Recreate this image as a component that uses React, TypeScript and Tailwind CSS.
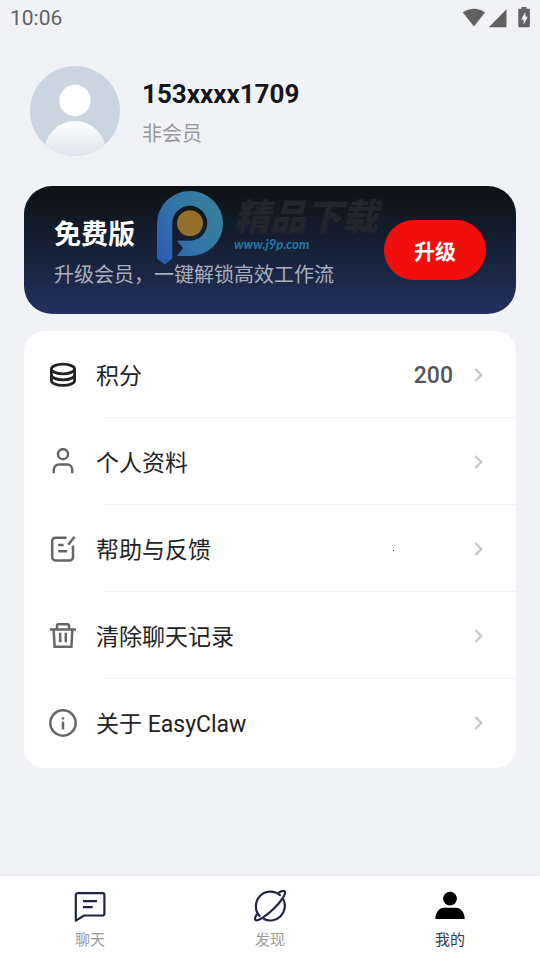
import type { ReactNode } from 'react';

const stroke = {
  width: 28,
  height: 28,
  viewBox: '0 0 28 28',
  fill: 'none',
  stroke: 'currentColor',
  strokeWidth: 2.5,
  'aria-hidden': true,
} as const;

function CoinsIcon() {
  return (
    <svg {...stroke} strokeWidth={2.8} className="text-[#232323]">
      <ellipse cx="14" cy="8" rx="11.6" ry="4.8" />
      <path d="M2.4 8v11.4c0 2.8 5 5 11.6 5s11.6-2.2 11.6-5V8" />
      <path d="M2.4 13.8c0 2.8 5 5 11.6 5s11.6-2.2 11.6-5" />
    </svg>
  );
}

function PersonIcon() {
  return (
    <svg {...stroke}>
      <circle cx="14" cy="6.2" r="5" />
      <path d="M4.8 25.2v-3.6a5 5 0 0 1 5-5h8.4a5 5 0 0 1 5 5v3.6" />
    </svg>
  );
}

function FeedbackIcon() {
  return (
    <svg {...stroke}>
      <path d="M17.6 2.7H6.4a3.2 3.2 0 0 0-3.2 3.2v16.3a3.2 3.2 0 0 0 3.2 3.2h14.4a3.2 3.2 0 0 0 3.2-3.2V10.6" />
      <path d="M19.2 9.8l6.4-8M9.2 10h5.4M9.2 16.2h9" />
    </svg>
  );
}

function TrashIcon() {
  return (
    <svg {...stroke}>
      <path d="M1 7.4h26M8 7.4V3.6a1.4 1.4 0 0 1 1.4-1.4h9.2A1.4 1.4 0 0 1 20 3.6v3.8" />
      <path d="M4.6 7.4l1 17.3h16.8l1-17.3M11.2 10.8v9.4M16.8 10.8v9.4" />
    </svg>
  );
}

function InfoIcon() {
  return (
    <svg {...stroke}>
      <circle cx="14" cy="14" r="12.7" />
      <path d="M14 12.8v7.6M14 8.2v2.3" />
    </svg>
  );
}

function ChevronIcon() {
  return (
    <svg width="10" height="16" viewBox="0 0 10 16" fill="none" stroke="#c8c8c8" strokeWidth="2.4" aria-hidden>
      <path d="M1.3 2l6 6-6 6" />
    </svg>
  );
}

function ChatIcon() {
  return (
    <svg width="32" height="32" viewBox="0 0 32 32" fill="none" stroke="#1f2540" strokeWidth="2.2" strokeLinejoin="round" aria-hidden>
      <path d="M1.8 30.6V5.2a2 2 0 0 1 2-2h24.6a2 2 0 0 1 2 2v18.3a2 2 0 0 1-2 2H10.2z" />
      <path d="M9 11.2h14M9 17.2h9.6" />
    </svg>
  );
}

function PlanetIcon() {
  return (
    <svg width="32" height="32" viewBox="0 0 32 32" fill="none" stroke="#1f2540" strokeWidth="2.2" strokeLinecap="round" aria-hidden>
      <path d="M26 5.2A14.6 14.6 0 0 0 5.6 26" />
      <path d="M29.4 9.6A14.6 14.6 0 0 1 10 29.1" />
      <path d="M25 2.4c3-1.7 5.3-1.9 5.9-.7 1.1 2.2-3.6 9.5-10.4 16.3S4.1 31.5 1.8 30.2c-1.3-.9-.6-3.4.9-5.6" />
    </svg>
  );
}

function MeIcon() {
  return (
    <svg width="32" height="32" viewBox="0 0 32 32" fill="#000" aria-hidden>
      <circle cx="16" cy="8.6" r="6.9" />
      <path d="M1.3 29c0-6.5 4-11.2 9-11.2h11.4c5 0 9 4.7 9 11.2z" />
    </svg>
  );
}

function Avatar() {
  return (
    <svg width="90" height="90" viewBox="0 0 90 90" className="shrink-0" role="img" aria-label="头像">
      <defs>
        <clipPath id="avatar-clip">
          <circle cx="45" cy="45" r="45" />
        </clipPath>
        <linearGradient id="avatar-body" x1="0" y1="55" x2="0" y2="90" gradientUnits="userSpaceOnUse">
          <stop offset="0" stopColor="#fff" />
          <stop offset="1" stopColor="#dfe4ec" />
        </linearGradient>
      </defs>
      <g clipPath="url(#avatar-clip)">
        <rect width="90" height="90" fill="#cbd5e1" />
        <circle cx="45" cy="34.5" r="15.7" fill="#fff" />
        <circle cx="45" cy="85.5" r="30.5" fill="url(#avatar-body)" />
      </g>
    </svg>
  );
}

function StatusBar() {
  return (
    <div className="flex h-9 items-center justify-between pl-2.5 pr-1.5 text-[#616161]">
      <span className="pt-0.5 text-[21px]">10:06</span>
      <svg width="72" height="22" viewBox="0 0 72 22" fill="currentColor" aria-hidden>
        <path d="M0.8 5.6C7.2.6 16.6.6 23 5.6L12 19.6z" />
        <path d="M44.5 2.2v18H26.8z" />
        <path d="M59.5 0h5v1.8h2.2a1.2 1.2 0 0 1 1.2 1.2v16a1.2 1.2 0 0 1-1.2 1.2h-9.2a1.2 1.2 0 0 1-1.2-1.2V3a1.2 1.2 0 0 1 1.2-1.2h2z" />
        <path d="M63.4 5v4.8h2.4L61.6 17.4v-4.8h-2.4z" fill="#f1f2f6" />
      </svg>
    </div>
  );
}

function Watermark() {
  return (
    <div className="pointer-events-none absolute left-[133px] top-1 flex gap-2.5" aria-hidden>
      <svg width="67" height="75" viewBox="0 0 67 75">
        <defs>
          <linearGradient id="pin" x1="0" y1="0.9" x2="1" y2="0.3">
            <stop offset="0" stopColor="#2c5cb0" />
            <stop offset="0.5" stopColor="#3275a8" />
            <stop offset="1" stopColor="#38809c" />
          </linearGradient>
        </defs>
        <path
          d="M0 33.5A33 32.5 0 1 1 33 66H19.7l6.6-7.7-6.6-7.6H33A17.5 17.5 0 1 0 15.3 33.5V68.5L7.7 74.5 0 68.5z"
          fill="url(#pin)"
        />
        <circle cx="33" cy="33.3" r="13" fill="#93702c" />
      </svg>
      <div className="pt-2.5 italic">
        <p className="text-4xl font-black leading-9 text-[#22272e]">精品下载</p>
        <p className="font-[Lato] text-[13px] font-bold leading-4 text-[#267aa5]">www.j9p.com</p>
      </div>
    </div>
  );
}

function MemberCard() {
  return (
    <section className="relative mx-6 mt-[30px] flex h-32 items-center justify-between rounded-[28px] bg-linear-to-b from-[#0c1214] to-[#23305f] px-[30px]">
      <Watermark />
      <div className="relative pt-2">
        <h2 className="text-[27px] font-bold leading-9 text-white">免费版</h2>
        <p className="mt-1.5 text-xl leading-8 text-[#a9afbb]">升级会员，一键解锁高效工作流</p>
      </div>
      <button type="button" className="relative h-[60px] w-[102px] rounded-full bg-[#f30e0e] pt-1.5 text-[21px] font-bold text-white">
        升级
      </button>
    </section>
  );
}

type MenuItem = {
  label: string;
  icon: ReactNode;
  value?: string;
};

const menuItems: MenuItem[] = [
  { label: '积分', icon: <CoinsIcon />, value: '200' },
  { label: '个人资料', icon: <PersonIcon /> },
  { label: '帮助与反馈', icon: <FeedbackIcon /> },
  { label: '清除聊天记录', icon: <TrashIcon /> },
  { label: '关于 EasyClaw', icon: <InfoIcon /> },
];

function MenuList() {
  return (
    <ul className="relative mx-6 mt-[17px] rounded-[20px] bg-white pb-0.5">
      {menuItems.map((item, index) => (
        <li key={item.label}>
          <button type="button" className="flex h-[86px] w-full items-center pl-[25px] pr-8 pt-0.5 text-left text-[#666]">
            {item.icon}
            <span className="ml-[19px] flex-1 pt-1 text-[23px] text-[#222]">{item.label}</span>
            {item.value && <span className="mr-[21px] pt-0.5 text-[23px] font-medium text-[#555]">{item.value}</span>}
            <ChevronIcon />
          </button>
          <div className={index < menuItems.length - 1 ? 'ml-20 h-px bg-[#f3f4f5]' : 'h-px'} />
        </li>
      ))}
      <li className="absolute left-3/4 top-1/2 size-px bg-[#111827]" aria-hidden />
    </ul>
  );
}

const tabs = [
  { label: '聊天', icon: <ChatIcon />, active: false },
  { label: '发现', icon: <PlanetIcon />, active: false },
  { label: '我的', icon: <MeIcon />, active: true },
];

function TabBar() {
  return (
    <nav className="grid h-21 grid-cols-3 bg-white shadow-[0_-1px_3px_rgba(0,0,0,0.03)]">
      {tabs.map((tab) => (
        <button
          key={tab.label}
          type="button"
          aria-current={tab.active ? 'page' : undefined}
          className={`flex flex-col items-center pt-3.5 text-[15px] ${tab.active ? 'text-[#33374a]' : 'text-[#9a9a9a]'}`}
        >
          {tab.icon}
          <span className="mt-2 leading-5">{tab.label}</span>
        </button>
      ))}
    </nav>
  );
}

export default function App() {
  return (
    <div className="flex min-h-screen flex-col bg-[#f1f2f6] font-[Roboto,'Noto_Sans_CJK_SC',sans-serif]">
      <StatusBar />
      <main className="flex-1">
        <header className="flex gap-[22px] px-[30px] pt-[30px]">
          <Avatar />
          <div className="pt-2.5">
            <h1 className="text-[26px] font-bold leading-9 text-[#15171a]">153xxxx1709</h1>
            <p className="mt-2 text-xl leading-7 text-[#999]">非会员</p>
          </div>
        </header>
        <MemberCard />
        <MenuList />
      </main>
      <TabBar />
    </div>
  );
}
